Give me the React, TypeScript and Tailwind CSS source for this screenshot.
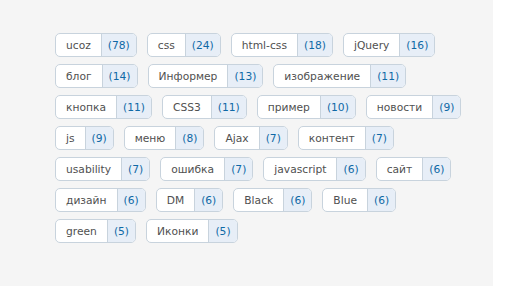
const rows: [string, number][][] = [
  [['ucoz', 78], ['css', 24], ['html-css', 18], ['jQuery', 16]],
  [['блог', 14], ['Информер', 13], ['изображение', 11]],
  [['кнопка', 11], ['CSS3', 11], ['пример', 10], ['новости', 9]],
  [['js', 9], ['меню', 8], ['Ajax', 7], ['контент', 7]],
  [['usability', 7], ['ошибка', 7], ['javascript', 6], ['сайт', 6]],
  [['дизайн', 6], ['DM', 6], ['Black', 6], ['Blue', 6]],
  [['green', 5], ['Иконки', 5]],
]

function Tag({ name, count }: { name: string; count: number }) {
  return (
    <a
      href="#"
      className="flex h-[24px] overflow-hidden rounded-[5px] border border-[#c8d3dd] bg-white text-[10.7px] leading-[23px]"
    >
      <span className="px-[10px] text-[#505050]">{name}</span>
      <span className="border-l border-[#c8d3dd] bg-[#e7eef7] px-[6px] text-[#0f69a6]">({count})</span>
    </a>
  )
}

export default function App() {
  return (
    <div className="h-[288px] w-[509px] bg-white">
      <div
        className="flex h-[286px] w-[493px] flex-col gap-[7px] bg-[#f5f5f5] pl-[55px] pt-[33px]"
        style={{ fontFamily: '"DejaVu Sans", Verdana, sans-serif' }}
      >
        {rows.map((row, i) => (
          <div key={i} className="flex gap-[10px]">
            {row.map(([name, count]) => (
              <Tag key={name} name={name} count={count} />
            ))}
          </div>
        ))}
      </div>
    </div>
  )
}
